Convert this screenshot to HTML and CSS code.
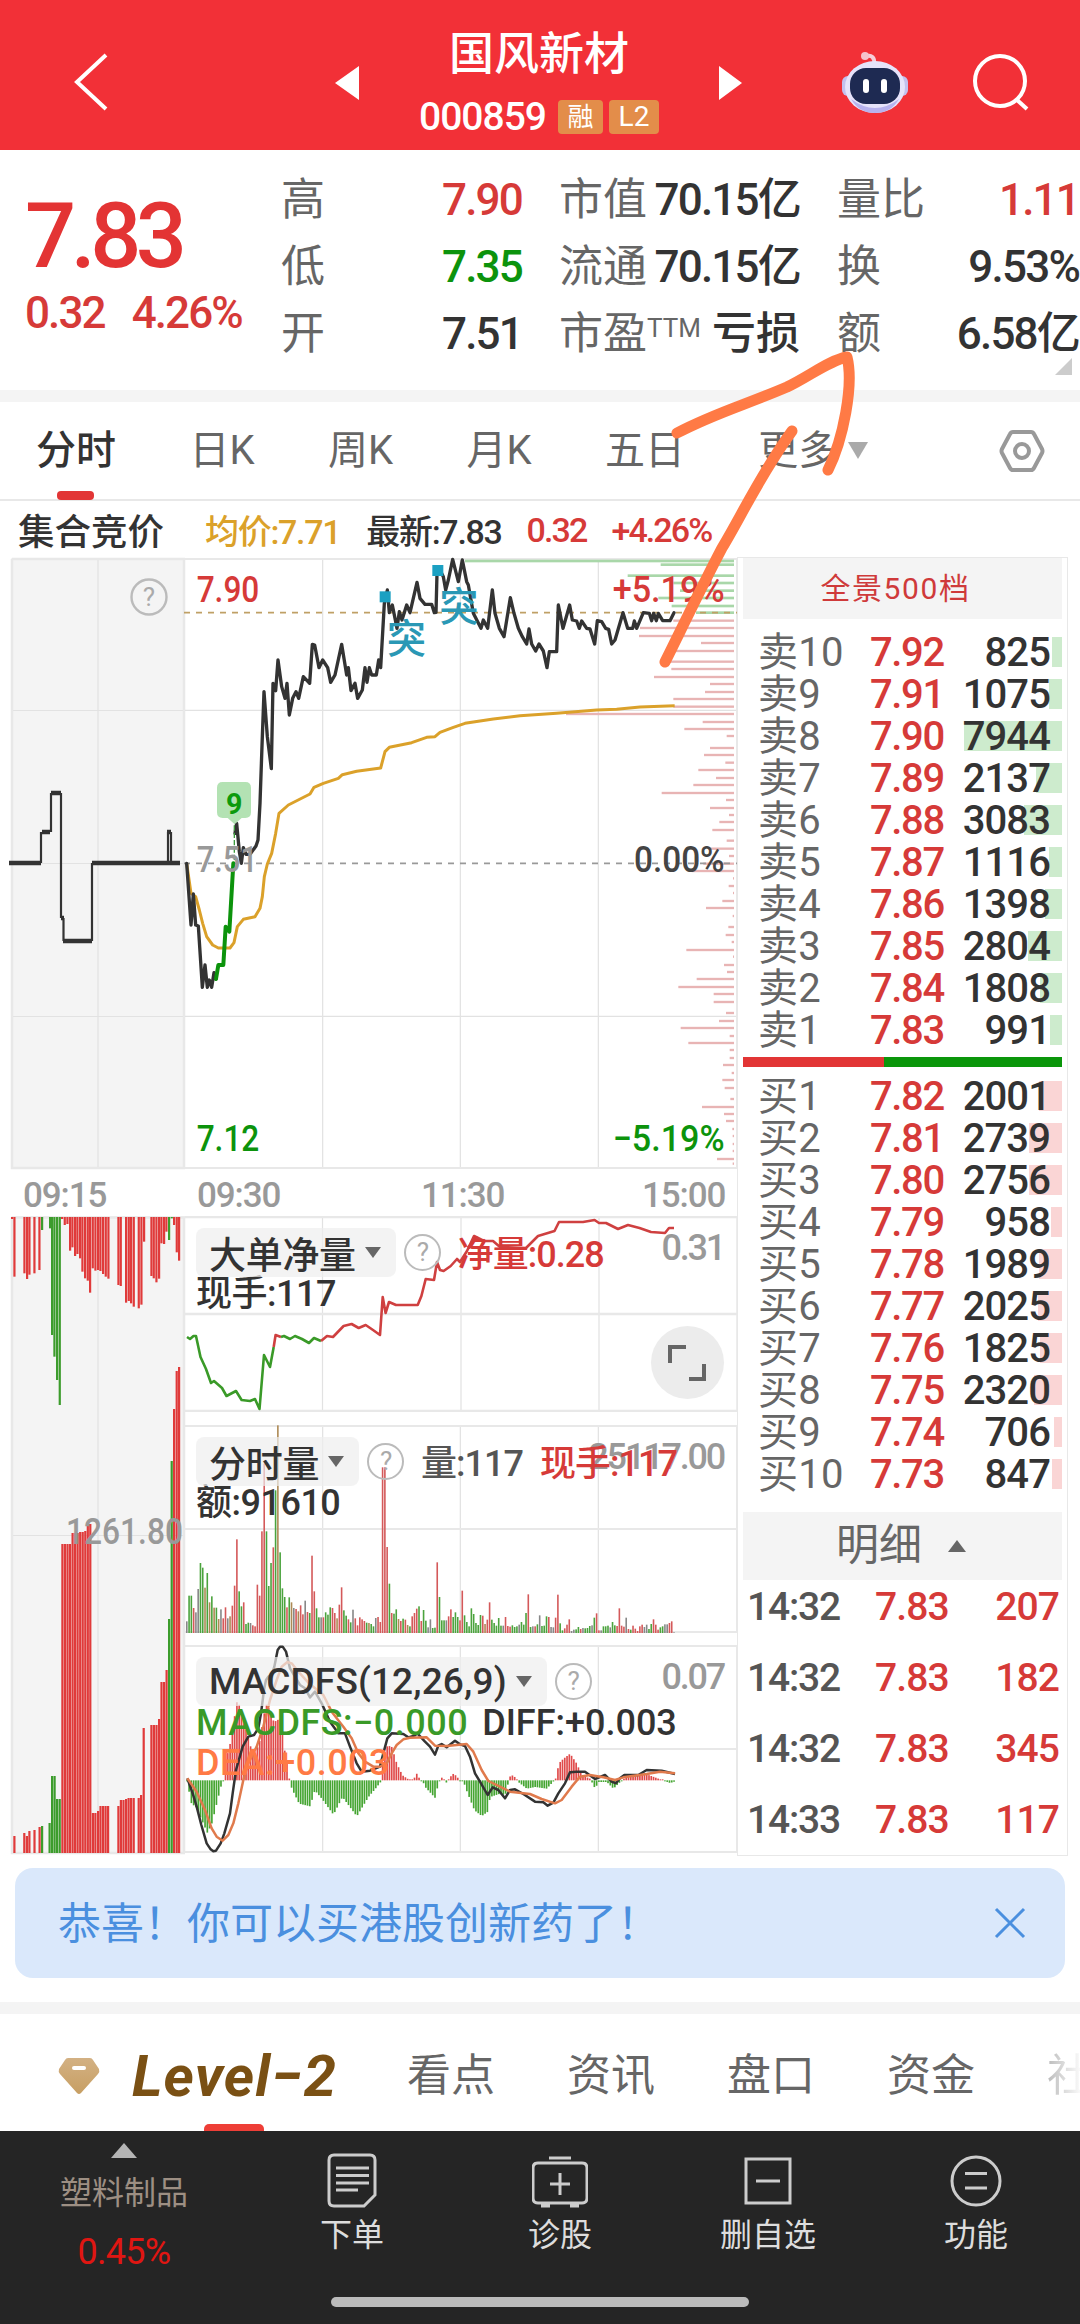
FILE: index.html
```html
<!DOCTYPE html>
<html lang="zh-CN">
<head>
  <meta charset="UTF-8" />
  <meta name="viewport" content="width=device-width, initial-scale=1.0"/>
  <title>国风新材 000859</title>
  <link rel="stylesheet" href="styles.css">
</head>
<body>
<div class="app">
  <header class="topbar">
    <svg class="back" width="40" height="64" viewBox="0 0 40 64"><path d="M35 4 L6 31 L35 58" /></svg>
    <svg class="prev" width="24" height="34" viewBox="0 0 24 34"><path d="M24 0 V34 L0 17 Z" /></svg>
    <div class="stock">
      <h1>国风新材</h1>
      <div class="code"><span>000859</span><em class="tag-r">融</em><em class="tag-l">L2</em></div>
    </div>
    <svg class="next" width="24" height="34" viewBox="0 0 24 34"><path d="M0 0 V34 L23 17 Z" /></svg>
    <svg class="robot" width="68" height="64" viewBox="0 0 68 64">
      <path d="M33 13 C34 6 30 4 26 5" fill="none" stroke="#f7cdd8" stroke-width="4"/>
      <circle cx="24" cy="5" r="4" fill="#f5c3cc"/>
      <rect x="1" y="25" width="12" height="20" rx="6" fill="#c3c0ee"/>
      <rect x="55" y="25" width="12" height="20" rx="6" fill="#c3c0ee"/>
      <ellipse cx="34" cy="36" rx="30" ry="26" fill="#e6e3fa"/>
      <path class="shade" d="M10 48 Q34 66 58 48 Q50 62 34 62 Q18 62 10 48 Z"/>
      <rect x="9" y="17" width="50" height="36" rx="16" fill="#1e2a52"/>
      <rect x="22" y="28" width="6" height="14" rx="3" fill="#fff"/>
      <rect x="40" y="28" width="6" height="14" rx="3" fill="#fff"/>
    </svg>
    <svg class="search" width="60" height="60" viewBox="0 0 60 60"><circle cx="29" cy="28" r="25" /><path d="M45 46 L56 56" /></svg>
  </header>

  <section class="quote">
    <div class="last">
      <div class="price">7.83</div>
      <div class="change"><span>0.32</span><span>4.26%</span></div>
    </div>
    <dl class="stats stats-1">
      <div><dt>高</dt><dd class="red">7.90</dd></div>
      <div><dt>低</dt><dd class="green">7.35</dd></div>
      <div><dt>开</dt><dd>7.51</dd></div>
    </dl>
    <dl class="stats stats-2">
      <div><dt>市值</dt><dd>70.15亿</dd></div>
      <div><dt>流通</dt><dd>70.15亿</dd></div>
      <div><dt>市盈<sup>TTM</sup></dt><dd class="loss">亏损</dd></div>
    </dl>
    <dl class="stats stats-3">
      <div><dt>量比</dt><dd class="red">1.11</dd></div>
      <div><dt>换</dt><dd>9.53%</dd></div>
      <div><dt>额</dt><dd>6.58亿</dd></div>
    </dl>
    <i class="corner"></i>
  </section>

  <nav class="tabs">
    <a class="active">分时</a>
    <a>日K</a>
    <a>周K</a>
    <a>月K</a>
    <a>五日</a>
    <a class="more">更多<i></i></a>
    <svg class="settings" width="46" height="44" viewBox="0 0 46 44">
      <path d="M14 3 H32 Q34 3 35 5 L43 20 Q44 22 43 24 L35 39 Q34 41 32 41 H14 Q12 41 11 39 L3 24 Q2 22 3 20 L11 5 Q12 3 14 3 Z" />
      <circle cx="23" cy="22" r="7" />
    </svg>
  </nav>

  <main class="market">
    <div class="charts">
      <div class="info">
        <span class="auction-label">集合竞价</span>
        <span class="gold">均价:7.71</span>
        <span class="latest">最新:7.83</span>
        <span class="red">0.32</span>
        <span class="red pct">+4.26%</span>
      </div>

      <div class="row price-row">
        <svg class="auction" width="174" height="611" viewBox="11 558 174 611">
          <rect x="11" y="558" width="174" height="611" fill="#f4f4f4"/>
          <path class="grid" d="M11 710.5 H185 M11 863.5 H185 M11 1016.5 H185 M98 559 V1168"/>
          <path class="frame" d="M12 559 H185 M12 559 V1168 H185 M184 559 V1168"/>
          <path d="M9 863 H41 M42 832 H50 M51 793 H61 M61 918 H64 M63 941 H92 M92 863 H180 M167 832 H171" fill="none" stroke="#333" stroke-width="4.5"/>
          <path d="M41 863 V832 M51 832 V793 M61 793 V918 M63.5 918 V941 M92 941 V863 M168 863 V832 M171 832 V863" fill="none" stroke="#333" stroke-width="2.2"/>
          <circle cx="149" cy="597" r="17.5" fill="none" stroke="#bbb" stroke-width="2.4"/>
          <text x="149" y="606" font-size="26" text-anchor="middle" fill="#aaa">?</text>
        </svg>
        <!-- 3 units per pixel -->
        <svg class="minute" width="555" height="611" viewBox="15 24 1665 1833">
          <path class="grid3" d="M15 481 H1671 M15 1399 H1671 M428 27 V1854 M841 27 V1854 M1255 27 V1854"/>
          <path class="frame3" d="M15 27 H1671 M15 1854 H1671 M1671 27 V1854"/>
          <g id="depth"></g>
          <path d="M12 188 H1671" stroke="#bfa065" stroke-width="5" stroke-dasharray="18 18"/>
          <path d="M12 940 H1671" stroke="#999" stroke-width="5" stroke-dasharray="18 18"/>
          <polyline class="avg" points="20,940 33,1030 47,1040 58,1080 68,1120 80,1160 98,1185 115,1194 150,1194 162,1178 172,1130 190,1108 225,1100 240,1075 247,1040 253,980 262,942 275,910 287,850 297,790 325,765 390,732 402,712 430,700 475,685 487,674 530,664 602,654 615,605 628,592 695,578 740,562 765,560 780,547 820,532 855,520 900,513 940,507 1020,497 1130,490 1250,480 1310,478 1380,471 1484,467"/>
          <polyline class="line" points="20,940 33,1125 40,1032 47,1125 55,1128 67,1312 75,1245 82,1312 88,1290 95,1312 102,1268 108,1287"/>
          <polyline class="line" points="165,850 170,820 178,905 184,940 190,893 198,913 210,913 228,888 234,870 240,760 247,560 252,425 262,560 274,656 279,400 287,422 294,330 305,410 315,445 321,400 328,495 338,445 348,425 356,445 370,380 389,400 397,283 404,285 417,353 428,330 443,353 452,397 465,375 485,283 500,375 505,353 513,422 525,400 533,445 547,420 555,353 561,397 568,353 575,375 589,375 596,330 602,353 613,160 622,120 628,188 637,165 651,235 658,185 666,210 680,165 690,188 711,97 720,145 735,163 755,163 763,188 768,187 771,70 780,60 790,80 797,120 805,90 818,28 835,95 847,30 860,95 865,105 880,190 903,235 910,210 923,235 937,120 945,190 958,235 972,260 991,143 1002,190 1015,235 1027,260 1040,282 1047,237 1055,282 1067,303 1077,282 1090,303 1101,353 1108,305 1130,305 1135,165 1149,235 1169,165 1177,210 1190,213 1198,235 1205,213 1220,235 1230,237 1244,282 1252,212 1265,215 1277,235 1286,238 1295,282 1305,270 1329,188 1343,235 1358,235 1363,213 1370,235 1390,188 1408,190 1415,212 1421,190 1429,212 1435,190 1448,212 1470,212 1482,188"/>
          <polyline class="up9" points="108,1287 115,1245 130,1245 137,1130 148,1145 160,940"/>
          <path d="M163 930 V820" stroke="#3b9a3b" stroke-width="4" stroke-dasharray="16 6"/>
          <path d="M128 696 H196 Q213 696 213 713 V787 Q213 804 196 804 H185 L164 823 L143 804 H128 Q111 804 111 787 V713 Q111 696 128 696 Z" fill="#b3e2b3"/>
          <text x="163" y="791" font-size="86" font-weight="700" text-anchor="middle" fill="#0c9a0c">9</text>
          <rect x="599" y="124" width="33" height="33" fill="#1ba0c2"/>
          <rect x="757" y="45" width="33" height="33" fill="#1ba0c2"/>
          <text class="mark" x="620" y="309">突</text>
          <text class="mark" x="778" y="212">突</text>
          <text x="50" y="156" class="lbl red" textLength="188" lengthAdjust="spacingAndGlyphs">7.90</text>
          <text x="50" y="966" class="lbl grey" textLength="183" lengthAdjust="spacingAndGlyphs">7.51</text>
          <text x="50" y="1802" class="lbl green" textLength="188" lengthAdjust="spacingAndGlyphs">7.12</text>
          <text x="1298" y="156" class="lbl red" textLength="336" lengthAdjust="spacingAndGlyphs">+5.19%</text>
          <text x="1362" y="966" class="lbl dark" textLength="272" lengthAdjust="spacingAndGlyphs">0.00%</text>
          <text x="1298" y="1802" class="lbl green" textLength="336" lengthAdjust="spacingAndGlyphs">−5.19%</text>
        </svg>
      </div>

      <div class="times">
        <span>09:15</span><span>09:30</span><span>11:30</span><span>15:00</span>
      </div>

      <div class="row">
        <svg class="auction" width="174" height="638" viewBox="11 1216 174 638">
          <rect x="11" y="1216" width="174" height="638" fill="#f4f4f4"/>
          <path class="grid" d="M11 1535.5 H185 M98 1217 V1853"/>
          <path class="frame" d="M12 1217.5 H185 M12 1217 V1853 H185 M184 1217 V1853"/>
          <g id="auctionBars"></g>
          <text x="66" y="1544" font-size="36" font-weight="500" fill="#999" textLength="117" lengthAdjust="spacingAndGlyphs">1261.80</text>
        </svg>
        <div class="indicators">
          <div class="pane net">
            <svg width="553" height="196" viewBox="185 1217 553 196">
              <path class="grid" d="M322.5 1217 V1412 M461 1217 V1412 M599 1217 V1412"/>
              <path class="frame" d="M185 1218 H738 M185 1315 H738 M185 1412 H738 M737.5 1217 V1412"/>
              <polyline class="net-g" points="187,1338 190,1340 193.5,1337 196,1337 200.5,1358 206,1370 211,1384 214,1382 222,1389 226.5,1397 236,1392 241.6,1401 250,1402 255,1400 259.5,1410 264,1356 270,1368 273.7,1348"/>
              <polyline class="net-r" points="273.7,1348 275.6,1336 281,1338"/>
              <polyline class="net-g" points="281,1338 284,1337 290,1340 295,1337 302,1340 309,1344 314,1339 321,1342"/>
              <polyline class="net-r" points="321,1342 327,1337 333,1338 343.6,1327 351.6,1325 358.7,1329 365.7,1326 373,1331 380,1336 382.7,1298 385.6,1314 389,1303 396,1306 417.7,1306 421.4,1297 425.7,1280 434,1281 437,1263 440,1271 443.6,1272 450.7,1267 457,1260 460,1263 467,1252 474,1237 484,1242 493,1242 500,1248 526,1249 538,1237 554.5,1232 559,1223 583,1223 594.6,1221 599,1224 606,1224 618,1230 628,1226 639.5,1229 651,1233 665,1234 669,1229 674,1229"/>
            </svg>
            <div class="head">
              <b class="chip">大单净量<i></i></b><u>?</u><span class="red sp">净量:0.28</span>
            </div>
            <div class="sub"><span>现手:117</span></div>
            <span class="scale">0.31</span>
            <button class="expand" aria-label="全屏">
              <svg width="40" height="40" viewBox="0 0 40 40"><path d="M3 20 V4 H19 M22 36 H37 V21" /></svg>
            </button>
          </div>
          <div class="pane volume">
            <svg width="553" height="208" viewBox="15 -225 1659 624">
              <path class="grid3" d="M428 -222 V396 M841 -222 V396 M1255 -222 V396"/>
              <path class="frame3" d="M15 -222 H1671 M15 87 H1671 M15 396 H1671 M1671 -222 V396"/>
              <g id="volumeBars"></g>
            </svg>
            <div class="head">
              <b class="chip">分时量<i></i></b><u>?</u><span class="sp mid">量:117</span><span class="red sp">现手:117</span>
            </div>
            <div class="sub"><span>额:91610</span></div>
            <span class="scale">25117.00</span>
          </div>
          <div class="pane macd">
            <svg width="553" height="208" viewBox="15 435 1659 624">
              <path class="grid3" d="M428 438 V1056 M841 438 V1056 M1255 438 V1056"/>
              <path class="frame3" d="M15 438 H1671 M15 747 H1671 M15 1056 H1671 M1671 438 V1056"/>
              <g id="macdBars"></g>
              <polyline class="diff" points="22,835 38,880 50,920 64,975 80,1030 92,1048 100,1054 108,1052 122,1030 133,1000 150,940 158,880 168,810 178,775 188,740 205,710 222,705 235,685 243,640 252,570 258,540 265,530 275,525 283,500 293,450 300,440 308,440 318,455 330,505 345,530 360,555 375,565 390,592 405,575 425,610 450,665 475,700 495,700 510,740 530,790 545,815 570,812 600,800 610,760 622,715 635,700 670,702 685,712 705,706 712,700 735,725 750,740 765,764 775,737 785,732 800,742 825,722 840,733 855,738 870,770 885,820 900,845 923,885 938,862 955,870 975,895 990,870 1005,868 1030,882 1065,905 1090,907 1103,917 1120,908 1135,880 1155,850 1170,817 1190,815 1215,815 1245,837 1275,825 1295,845 1308,850 1320,835 1333,825 1350,825 1375,825 1400,810 1445,812 1485,822"/>
              <polyline class="dea" points="22,835 50,875 75,930 95,985 110,1010 128,1022 145,1005 160,970 175,910 190,840 205,790 230,740 250,680 270,600 290,540 305,500 322,486 335,490 355,515 385,548 430,585 455,635 490,680 515,715 535,760 555,785 580,800 600,800 620,790 635,760 650,735 670,718 690,713 740,712 765,737 800,738 860,732 880,755 905,810 925,843 960,860 990,875 1050,882 1085,897 1125,910 1145,900 1175,860 1200,830 1230,825 1270,832 1305,840 1330,832 1400,822 1440,815 1485,820"/>
            </svg>
            <div class="head">
              <b class="chip">MACDFS(12,26,9)<i></i></b><u>?</u>
            </div>
            <div class="sub"><span class="macd-g">MACDFS:−0.000</span><span>DIFF:+0.003</span></div>
            <div class="sub"><span class="orange">DEA:+0.003</span></div>
            <span class="scale">0.07</span>
          </div>
        </div>
      </div>
    </div>

    <aside class="book">
      <div class="book-title">全景500档</div>
      <ul class="levels sell" id="sell"></ul>
      <div class="ratio"><i></i></div>
      <ul class="levels buy" id="buy"></ul>
      <div class="detail-title">明细<i></i></div>
      <ul class="ticks">
        <li><span>14:32</span><b>7.83</b><em>207</em></li>
        <li><span>14:32</span><b>7.83</b><em>182</em></li>
        <li><span>14:32</span><b>7.83</b><em>345</em></li>
        <li><span>14:33</span><b>7.83</b><em>117</em></li>
      </ul>
    </aside>
  </main>

  <div class="banner">
    <span>恭喜！你可以买港股创新药了！</span>
    <svg width="32" height="32" viewBox="0 0 32 32"><path d="M2 2 L30 30 M30 2 L2 30" /></svg>
  </div>

  <nav class="sections">
    <svg width="42" height="38" viewBox="0 0 42 38">
      <defs><linearGradient id="gem" x1="0" y1="0" x2="0" y2="1"><stop offset="0" stop-color="#d3b183"/><stop offset="1" stop-color="#c79f63"/></linearGradient></defs>
      <path d="M10 1 H32 Q34 1 35 3 L41 12 Q42 15 40 17 L23 36 Q21 38 19 36 L2 17 Q0 15 1 12 L7 3 Q8 1 10 1 Z" fill="url(#gem)"/>
      <rect x="14" y="9" width="14" height="4" rx="2" fill="#fff"/>
    </svg>
    <a class="level2">Level−2</a>
    <a>看点</a>
    <a>资讯</a>
    <a>盘口</a>
    <a>资金</a>
    <a class="cut">社</a>
  </nav>

  <footer class="bottom">
    <div class="sector">
      <i></i>
      <span>塑料制品</span>
      <b>0.45%</b>
    </div>
    <a>
      <svg width="56" height="56" viewBox="0 0 56 56"><path d="M10 2 H46 Q51 2 51 7 V42 L40 53 H10 Q5 53 5 48 V7 Q5 2 10 2 Z M12 15 H45 M12 22.5 H45 M12 30 H45 M12 37 H34" /></svg>
      下单
    </a>
    <a>
      <svg width="56" height="56" viewBox="0 0 56 56"><path d="M17 5 H39 M6 10 H50 Q55 10 55 15 V45 Q55 50 50 50 H6 Q1 50 1 45 V15 Q1 10 6 10 Z M28 20 V42 M18 31 H38 M9 53 H18 M38 53 H47" /></svg>
      诊股
    </a>
    <a>
      <svg width="56" height="56" viewBox="0 0 56 56"><path d="M6 6 H50 V50 H6 Z M16 28 H40" /></svg>
      删自选
    </a>
    <a>
      <svg width="56" height="56" viewBox="0 0 56 56"><circle cx="28" cy="28" r="24" /><path d="M17 20.5 H39 M17 35 H39" /></svg>
      功能
    </a>
    <div class="home-bar"></div>
  </footer>

  <!-- hand-drawn arrow -->
  <svg class="arrow" width="1080" height="700" viewBox="0 0 1080 700">
    <path d="M677 433 C715 413 745 405 787 387 C810 376 828 361 847 357 C854 385 843 440 828 470 M665 662 C680 632 700 590 722 548 C742 515 760 475 792 431" />
  </svg>
</div>
<script src="charts.js"></script>
</body>
</html>
```
FILE: styles.css
```css
* {
  box-sizing: border-box;
}

body {
  margin: 0;
  background: #fff;
  color: #333;
  font-family: Roboto, "Noto Sans CJK SC", sans-serif;
}

h1, dl, dd, ul {
  margin: 0;
  padding: 0;
}

ul { list-style: none; }
i, em { font-style: normal; }
svg { display: block; flex: none; }

.red { color: #d63a38; fill: #d63a38; }
.green { color: #0c930c; fill: #0c930c; }
.grey { fill: #999; }
.dark { fill: #444; }
.gold { color: #dba12a; }
.orange { color: #ff7a45; }
.macd-g { color: #3a9a28; }
.mid { color: #555; }

.app {
  position: relative;
  width: 1080px;
  height: 2324px;
  overflow: hidden;
}

/* Header */
.topbar {
  display: flex;
  align-items: center;
  height: 150px;
  padding: 16px 49px 0 71px;
  background: #f23037;
}

.topbar path { fill: #fff; }
.topbar .back path { fill: none; stroke: #fff; stroke-width: 4; }
.prev { margin-left: 224px; }

.stock {
  width: 364px;
  text-align: center;
  color: #fff;
}

.stock h1 {
  font-size: 45px;
  line-height: 62px;
  font-weight: 500;
  margin-top: 6px;
}

.code {
  display: flex;
  justify-content: center;
  align-items: center;
  font-size: 39px;
  line-height: 62px;
  letter-spacing: -1px;
  font-weight: 500;
}

.code em {
  height: 34px;
  line-height: 34px;
  border-radius: 4px;
  background: #e38d4a;
  text-align: center;
  letter-spacing: 0;
  font-weight: 400;
}

.tag-r { width: 45px; margin-left: 12px; font-size: 26px; }
.tag-l { width: 50px; margin-left: 6px; font-size: 28px; }

.robot { margin-left: 98px; }
.topbar .robot path:first-child { fill: none; }
.topbar .robot .shade { fill: #b7b2ee; }
.search { margin-left: 62px; }
.search circle, .topbar .search path { fill: none; stroke: #fff; stroke-width: 4; }

/* Quote */
.quote {
  position: relative;
  display: flex;
  height: 252px;
  padding-top: 18px;
  border-bottom: 12px solid #f4f4f4;
}

.last { width: 281px; padding-left: 25px; color: #e33434; }

.price {
  font-size: 90px;
  line-height: 110px;
  margin-top: 14px;
  font-weight: 500;
  letter-spacing: -5.5px;
}

.change {
  display: flex;
  gap: 27px;
  margin-top: -3px;
  font-size: 44px;
  line-height: 48px;
  letter-spacing: -1.9px;
  font-weight: 500;
  color: #d63a38;
}

.stats div {
  display: flex;
  justify-content: space-between;
  height: 67px;
  line-height: 64px;
  font-size: 44px;
  white-space: nowrap;
}

.stats dt { font-size: 44px; color: #666; }
.stats dd { letter-spacing: -1.8px; font-weight: 500; margin-right: 0; }
.stats sup { font-size: 26px; line-height: 1; vertical-align: 12px; }
.stats .loss { letter-spacing: 0; }
.stats-1 { width: 241px; }
.stats-2 { width: 241px; margin-left: 37px; }
.stats-3 { width: 242px; margin-left: 37px; }

.corner {
  position: absolute;
  right: 8px;
  bottom: 15px;
  border-left: 17px solid transparent;
  border-bottom: 17px solid #ccc;
}

/* Chart tabs */
.tabs {
  display: flex;
  align-items: center;
  gap: 73.4px;
  height: 99px;
  padding-left: 36px;
  border-bottom: 2px solid #e8e8e8;
  font-size: 40px;
  color: #666;
}

.tabs a { line-height: 101px; }

.tabs .active {
  position: relative;
  color: #333;
  font-weight: 500;
}

.tabs .active::after {
  content: "";
  position: absolute;
  left: 21px;
  bottom: 1px;
  width: 37px;
  height: 9px;
  border-radius: 4px;
  background: #e23535;
}

.more { display: flex; align-items: center; }
.more i {
  margin-left: 10px;
  border: 10px solid transparent;
  border-top: 17px solid #aaa;
  border-bottom: 0;
}
.settings { margin-left: 57px; }
.settings path, .settings circle { fill: none; stroke: #999; stroke-width: 4; }

/* Charts */
.market { display: flex; height: 1355px; }
.charts { width: 738px; }

.info {
  display: flex;
  align-items: center;
  height: 57px;
  padding: 0 0 0 18px;
  font-size: 34px;
  letter-spacing: -1.3px;
  font-weight: 500;
  white-space: nowrap;
}

.auction-label { font-size: 36.5px; letter-spacing: 0; margin-right: 41px; }
.gold { margin-right: 26px; }
.latest { margin-right: 25px; }
.info .pct { margin-left: 25px; }
.info .red { letter-spacing: -1.9px; }

.row { display: flex; padding-left: 11px; }
.auction, .minute { overflow: visible; }

.grid, .grid3 { fill: none; stroke: #e2e2e2; stroke-width: 1.2; }
.grid3 { stroke-width: 3.6; }
.frame, .frame3 { fill: none; stroke: #e8e8e8; stroke-width: 2.5; }
.frame3 { stroke-width: 6; }

.avg { fill: none; stroke: #dba12a; stroke-width: 9; stroke-linejoin: round; }
.line { fill: none; stroke: #333; stroke-width: 10; stroke-linejoin: round; stroke-linecap: round; }
.up9 { fill: none; stroke: #0c930c; stroke-width: 12; stroke-linejoin: round; stroke-linecap: round; }
.mark { font-size: 118px; fill: #2a98b5; font-weight: 500; }
.lbl { font-size: 109px; font-weight: 500; }

.times {
  display: grid;
  grid-template-columns: 174px 224px 221px 91px;
  height: 47px;
  padding-left: 23px;
  line-height: 54px;
  font-size: 35px;
  letter-spacing: -1.1px;
  font-weight: 500;
  color: #999;
}

.indicators { display: flex; flex-direction: column; width: 553px; gap: 12px; }

.pane {
  position: relative;
  height: 208px;
  padding: 12px 0 0 11px;
}

.pane.net { height: 197px; }
.pane > svg { position: absolute; left: 0; top: 0; }

.head {
  position: relative;
  z-index: 1;
  display: flex;
  align-items: center;
  height: 49px;
  font-size: 36px;
  letter-spacing: -1px;
  font-weight: 500;
  white-space: nowrap;
}

.chip {
  display: flex;
  align-items: center;
  height: 49px;
  padding: 0 15px 0 13px;
  border-radius: 8px;
  background: rgba(238, 238, 238, 0.7);
  font-size: 37px;
  font-weight: 500;
  letter-spacing: -0.3px;
}

.chip i {
  margin-left: 9px;
  border: 8px solid transparent;
  border-top: 11px solid #666;
  border-bottom: 0;
}

.head u {
  width: 37px;
  height: 37px;
  margin-left: 8px;
  border: 2.5px solid #bbb;
  border-radius: 50%;
  text-decoration: none;
  text-align: center;
  font-size: 26px;
  font-weight: 400;
  line-height: 33px;
  color: #aaa;
}

.head .sp { margin-left: 17px; margin-top: -4px; }

.sub {
  position: relative;
  display: flex;
  gap: 14px;
  height: 40px;
  margin-top: -5px;
  font-size: 36px;
  line-height: 44px;
  letter-spacing: -0.5px;
  font-weight: 500;
  white-space: nowrap;
}

.macd .head .chip { letter-spacing: 0.15px; }
.macd .sub { margin-top: -5px; letter-spacing: 0.5px; gap: 14px; }
.macd .sub span + span { letter-spacing: 0; }
.macd .sub + .sub { margin-top: 0; }

.scale {
  position: absolute;
  right: 14px;
  top: 11px;
  font-size: 36px;
  line-height: 43px;
  letter-spacing: -2.2px;
  font-weight: 500;
  color: #999;
}

.net-g, .net-r { fill: none; stroke: #3a9a28; stroke-width: 2.6; stroke-linejoin: round; }
.net-r { stroke: #cf4040; }
.diff, .dea { fill: none; stroke: #333; stroke-width: 7.5; stroke-linejoin: round; }
.dea { stroke: #e07a4c; }

.expand {
  position: absolute;
  left: 466px;
  top: 110px;
  width: 73px;
  height: 73px;
  padding: 16px;
  border: 0;
  border-radius: 50%;
  background: #ececec;
}

.expand path { fill: none; stroke: #666; stroke-width: 4; }

/* Order book */
.book {
  width: 331px;
  height: 1299px;
  margin-top: 56px;
  margin-left: -1px;
  padding: 0 5px;
  border: 1px solid #e8e8e8;
  background: #fff;
}

.book-title {
  height: 61px;
  line-height: 61px;
  background: #f4f4f4;
  text-align: center;
  padding-right: 14px;
  font-size: 30px;
  letter-spacing: 1.6px;
  color: #cf3a3a;
}

.levels { padding-top: 12px; }

.levels li {
  display: grid;
  grid-template-columns: 112px 98px 82px;
  align-items: center;
  position: relative;
  height: 42px;
  padding-left: 15px;
  font-size: 40px;
  line-height: 44px;
  letter-spacing: -0.9px;
}

.levels span { color: #666; font-size: 40px; letter-spacing: 0.2px; }
.levels b { color: #d63a38; font-weight: 500; z-index: 1; letter-spacing: -1.4px; }
.levels em { justify-self: end; z-index: 1; font-weight: 500; }

/* size bar behind the quantity */
.levels i {
  position: absolute;
  right: 0;
  top: 6px;
  height: 30px;
  background: #cdebcd;
}

.levels.buy { padding-top: 8px; }
.levels.buy i { background: #fad5d5; }

.ratio { height: 10px; margin-top: 6px; background: #0a960a; }
.ratio i { display: block; width: 141px; height: 10px; background: #e23535; }

.detail-title {
  display: flex;
  align-items: center;
  height: 68px;
  line-height: 62px;
  margin-top: 17px;
  padding: 0 0 2px 93px;
  background: #f4f4f4;
  font-size: 43px;
  color: #666;
}

.detail-title i {
  margin: 2px 0 0 26px;
  border: 9px solid transparent;
  border-bottom: 12px solid #666;
  border-top: 0;
}

.ticks { display: grid; gap: 31px; padding-top: 6px; }

.ticks li {
  display: grid;
  grid-template-columns: 128px 90px 1fr;
  height: 40px;
  padding: 0 3px 0 4px;
  font-size: 39px;
  line-height: 42px;
  letter-spacing: -0.9px;
}

.ticks span { color: #555; font-weight: 500; letter-spacing: -1.2px; }
.ticks b, .ticks em { font-weight: 500; color: #d63a38; }
.ticks em { text-align: right; }

/* Banner */
.banner {
  display: flex;
  align-items: center;
  justify-content: space-between;
  height: 110px;
  margin: 12px 15px 24px;
  padding: 0 39px 0 43px;
  border-radius: 18px;
  background: #dae8fb;
  font-size: 43px;
  color: #4a8fdf;
}

.banner span { margin-top: -6px; }
.banner svg path { fill: none; stroke: #4a8fdf; stroke-width: 3; }

/* Section tabs */
.sections {
  position: relative;
  display: flex;
  align-items: center;
  height: 129px;
  padding: 6px 0 0 58px;
  border-top: 12px solid #f4f4f4;
  font-size: 44px;
  color: #666;
  white-space: nowrap;
  overflow: hidden;
}

.sections a { flex: none; margin-right: 72px; line-height: 60px; }

.sections .level2 {
  width: 204px;
  margin: 0 71px 0 32px;
  font-size: 58px;
  font-weight: 700;
  font-style: italic;
  letter-spacing: 1.1px;
  color: #7a5014;
}

.sections .cut {
  margin-right: 0;
  background: linear-gradient(90deg, #bbb, #fff 36px);
  background-clip: text;
  -webkit-background-clip: text;
  color: transparent;
}

.sections::after {
  content: "";
  position: absolute;
  left: 204px;
  bottom: 0;
  width: 60px;
  height: 7px;
  border-radius: 5px 5px 0 0;
  background: #ee3e37;
}

/* Bottom bar */
.bottom {
  position: relative;
  display: flex;
  height: 193px;
  background: #252525;
  color: #ddd;
  font-size: 32px;
}

.bottom a, .sector {
  display: flex;
  flex-direction: column;
  align-items: center;
  width: 208px;
}

.bottom a { padding-top: 22px; line-height: 44px; }
.bottom a svg { margin-bottom: 4px; }
.bottom a path, .bottom a circle { fill: none; stroke: #ccc; stroke-width: 3; }

.sector { width: 248px; padding-top: 12px; color: #9d8f83; }

.sector i {
  border: 13px solid transparent;
  border-bottom: 15px solid #b5b5b5;
  border-top: 0;
}

.sector span { margin-top: 11px; line-height: 48px; }
.sector b { margin-top: 13px; line-height: 44px; font-size: 36px; font-weight: 400; letter-spacing: -0.7px; color: #e01612; }

.home-bar {
  position: absolute;
  left: 331px;
  bottom: 17px;
  width: 418px;
  height: 10px;
  border-radius: 5px;
  background: #bbb;
}

.arrow { position: absolute; left: 0; top: 0; }
.arrow path { fill: none; stroke: #ff7a45; stroke-width: 11; stroke-linecap: round; stroke-linejoin: round; }
```
FILE: charts.js
```js
const NS = 'http://www.w3.org/2000/svg';
const RED = '#e03a3a';
const GREEN = '#3c9c2c';

function bar(parent, x, y, w, h, fill) {
  const r = document.createElementNS(NS, 'rect');
  r.setAttribute('x', x);
  r.setAttribute('y', y);
  r.setAttribute('width', w);
  r.setAttribute('height', h);
  r.setAttribute('fill', fill);
  parent.appendChild(r);
}

// order book
const sell = [
  [10, '7.92', 825, 10], [9, '7.91', 1075, 13], [8, '7.90', 7944, 98], [7, '7.89', 2137, 26], [6, '7.88', 3083, 38],
  [5, '7.87', 1116, 13], [4, '7.86', 1398, 17], [3, '7.85', 2804, 34], [2, '7.84', 1808, 22], [1, '7.83', 991, 12]
];
const buy = [
  [1, '7.82', 2001, 23], [2, '7.81', 2739, 33], [3, '7.80', 2756, 33], [4, '7.79', 958, 11], [5, '7.78', 1989, 23],
  [6, '7.77', 2025, 24], [7, '7.76', 1825, 22], [8, '7.75', 2320, 28], [9, '7.74', 706, 8], [10, '7.73', 847, 10]
];

function levels(id, name, rows) {
  document.getElementById(id).innerHTML = rows.map(([n, price, qty, w]) =>
    `<li><span>${name}${n}</span><b>${price}</b><em>${qty}</em><i style="width:${w}px"></i></li>`).join('');
}
levels('sell', '卖', sell);
levels('buy', '买', buy);

// volume by price: [y, length]
const depth = document.getElementById('depth');
const asks = [[33, 807], [44, 220], [77, 319], [99, 182], [122, 162], [144, 227], [168, 187], [188, 114]];
const bids = [
  [212, 182], [234, 282], [258, 285], [279, 99], [303, 177], [335, 192], [357, 188], [381, 240], [402, 72], [426, 87],
  [447, 182], [470, 182], [492, 504], [516, 94], [537, 149], [558, 22], [594, 72], [615, 90], [638, 26], [660, 107],
  [684, 54], [705, 122], [729, 217], [750, 24], [774, 72], [795, 15], [816, 44], [840, 65], [872, 22], [896, 77],
  [918, 15], [941, 92], [963, 127], [985, 3], [1008, 16], [1029, 3], [1053, 35], [1074, 84], [1098, 4], [1131, 17],
  [1155, 25], [1176, 7], [1200, 143], [1220, 3], [1245, 30], [1266, 21], [1287, 112], [1311, 167], [1332, 61], [1356, 61],
  [1389, 24], [1413, 45], [1434, 160], [1458, 13], [1479, 137], [1500, 13], [1524, 13], [1545, 33], [1569, 7], [1590, 35],
  [1614, 28], [1647, 11], [1671, 96], [1692, 30], [1713, 24], [1737, 5], [1758, 4], [1782, 4], [1803, 4], [1827, 51], [1841, 4]
];
asks.forEach(([y, len]) => bar(depth, 1662 - len, y - 4, len, 8, '#a9d7a9'));
bids.forEach(([y, len]) => bar(depth, 1662 - len, y - 3.5, len, 7, '#e8b4b4'));

// minute volume, one bar per minute
const volume = ('k35 g112 g112 r75 k62 k132 g210 g196 o136 g180 o92 g110 o76 g76 o42 k71 r44 r77 k44 o50 r82 r142 r281 g125 g80 r92 ' +
  'g27 g31 k30 r23 r20 r145 r112 r305 r508 g305 g141 g210 r257 g428 o623 g242 g134 g108 r77 g107 o92 k75 r72 o65 r83 r56 k97 ' +
  'r63 g60 r232 r125 g74 g47 k47 r47 g62 g55 g77 r75 r60 o44 r85 r137 g68 g52 r41 g32 k70 r44 r23 r47 r41 r36 g31 o30 g27 g20 ' +
  'k45 r48 r33 r497 r497 r258 g148 r60 g58 g71 o42 r36 g43 r40 o24 g20 r50 r60 r73 g80 r36 g69 g37 k17 k41 g15 g16 r212 g108 ' +
  'g38 g38 k38 r50 r71 g48 g62 g48 r38 r127 g53 g33 g20 g74 g57 g30 g24 g54 r52 o27 r40 r92 g40 g30 g22 g45 g22 k22 r48 r21 ' +
  'r19 g23 g18 g20 k25 g33 g25 g60 r116 g18 k20 r20 g26 k53 g21 g22 g50 r48 k18 k17 r46 r115 g29 g8 r14 r25 r41 k6 k10 g11 ' +
  'g18 r12 k15 g14 g15 g21 k23 g46 r59 r8 k8 g20 g20 g22 k17 g33 g23 r21 r74 r22 r19 k46 r12 g10 r22 r13 r6 r20 r25 k18 k25 ' +
  'g12 g27 r41 r25 r10 g17 g20 k26 k26 r30 r35 k2').split(' ');
const volColor = { r: '#d4595a', g: '#4ba33d', k: '#888', o: '#ad8a55' };
const volumeBars = document.getElementById('volumeBars');
volume.forEach((v, i) => {
  const h = Number(v.slice(1));
  bar(volumeBars, 18 + i * 6.83, 399 - h, 4.8, h, volColor[v[0]]);
});

// MACD histogram, interpolated between turning points
const macd = [
  [20, 0], [34, -70], [47, -80], [82, -158], [95, -130], [122, -20], [129, -3], [132, 0], [135, 50], [150, 110], [172, 245],
  [190, 180], [220, 70], [238, 115], [257, 230], [270, 210], [281, 175], [300, 185], [315, 80], [322, 50], [328, 0],
  [335, -25], [357, -70], [390, -78], [404, -30], [425, -55], [460, -103], [487, -50], [530, -108], [565, -50], [590, -20],
  [603, -3], [605, 0], [608, 60], [622, 105], [635, 100], [650, 50], [667, 15], [685, 3], [700, 3], [710, 20], [720, 2],
  [728, -3], [735, -20], [767, -55], [774, -5], [785, 8], [800, -8], [812, 12], [820, 20], [830, 12], [838, 0], [850, 0],
  [855, -20], [883, -90], [905, -107], [922, -95], [930, -50], [960, -40], [975, -45], [985, -5], [990, 12], [998, 15],
  [1006, 8], [1012, -3], [1040, -25], [1065, -20], [1100, -25], [1120, -3], [1130, 10], [1135, 50], [1150, 65], [1170, 80],
  [1190, 50], [1205, 15], [1230, 5], [1245, -25], [1255, -5], [1280, -5], [1300, -25], [1320, -5], [1335, 8], [1400, 18],
  [1440, 3], [1470, -8], [1486, -3]
];
const macdBars = document.getElementById('macdBars');
for (let i = 0, k = 0; i < 215; i++) {
  const x = 20 + i * 6.83;
  while (k < macd.length - 2 && macd[k + 1][0] < x) k++;
  const [x0, y0] = macd[k];
  const [x1, y1] = macd[k + 1];
  const v = y0 + (y1 - y0) * (x - x0) / (x1 - x0);
  const h = Math.max(Math.abs(v), 3);
  bar(macdBars, x - 2, v > 0 ? 841 - h : 841, 5, h, v > 0 ? '#e04a4a' : '#45a532');
}

// call auction: unmatched (hanging) and matched (standing) volume, [x, y, down]
const auctionBars = document.getElementById('auctionBars');
const hanging = [
  [36, 57], [43, 230], [73, 220], [81, 237], [88, 224], [103, 220], [118, 210], [126, 90, 1], [150, 85, 1], [156, 405, 1],
  [163, 470, 1], [171, 540, 1], [179, 615, 1], [186, 57], [194, 75], [202, 72], [210, 152], [217, 142], [225, 168],
  [232, 162], [240, 175], [247, 215], [255, 235], [263, 242], [270, 278], [278, 205], [286, 212], [294, 210], [301, 213],
  [309, 222], [317, 230], [325, 236], [355, 255], [362, 258], [378, 308], [386, 303], [393, 310], [401, 320], [416, 325],
  [424, 314], [432, 125], [454, 228], [461, 235], [469, 247], [477, 236], [484, 130], [492, 132], [499, 95], [507, 120, 1],
  [515, 55, 1], [522, 75], [530, 157], [537, 182]
];
hanging.forEach(([x, y, g]) => bar(auctionBars, x / 3 - 1, 1217, 2.2, (y - 51) / 3, g ? GREEN : RED));

const standing = [
  [14.3, 1836], [24.2, 1833], [26.8, 1836], [29.3, 1831], [34.4, 1830], [39.5, 1827], [42, 1826, 1], [49.5, 1823, 1],
  [52, 1776, 1], [54.5, 1776, 1], [57, 1799, 1], [59.6, 1799, 1], [62.3, 1544], [64.8, 1544], [67.4, 1544], [69.9, 1544],
  [72.5, 1533], [75, 1533], [77.5, 1533], [80.1, 1532], [82.6, 1532], [85.2, 1531], [87.7, 1522], [90.2, 1524],
  [92.8, 1813], [95.3, 1813], [98, 1811], [100.4, 1806], [103, 1806], [105.5, 1806], [108, 1806], [118.3, 1806],
  [120.8, 1800], [123.4, 1800], [126, 1799], [128.5, 1798], [131, 1798], [133.6, 1798], [138.6, 1798], [141, 1795],
  [143.6, 1728], [151.3, 1725], [153.8, 1725], [156.4, 1725], [159, 1719], [161.4, 1682], [164, 1682], [166.5, 1670],
  [169, 1619, 1], [171.6, 1461, 1], [174, 1409], [176.6, 1371], [179, 1367]
];
standing.forEach(([x, y, g]) => bar(auctionBars, x - 1, y, 2.2, 1853 - y, g ? GREEN : RED));
```
